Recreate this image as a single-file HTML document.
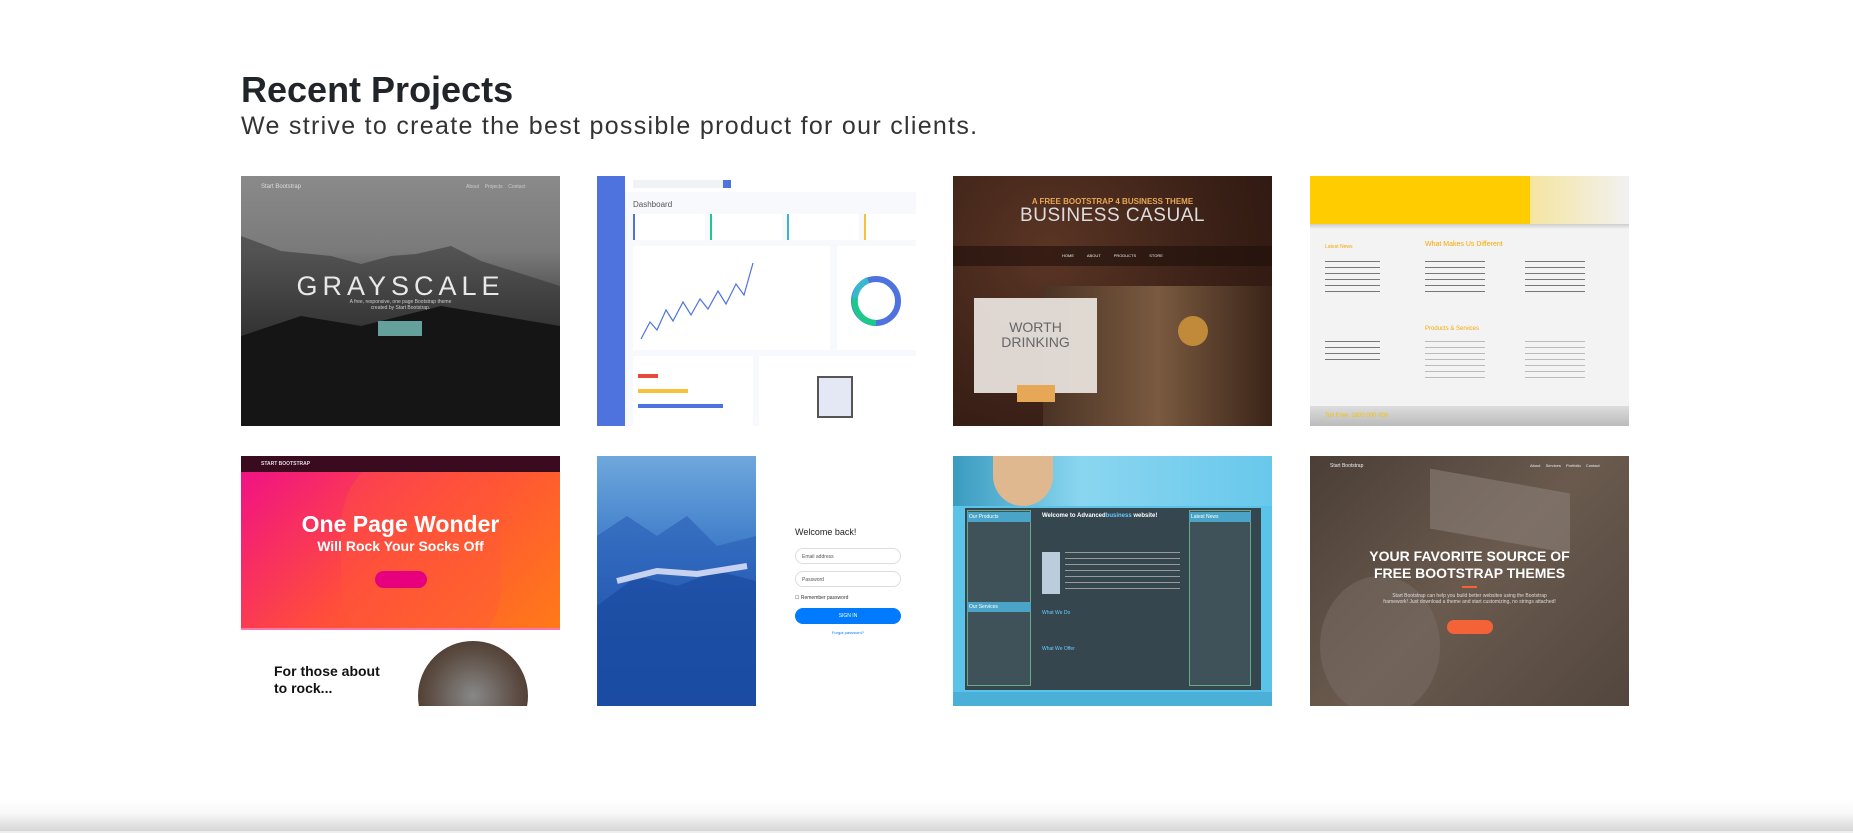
<!DOCTYPE html>
<html><head><meta charset="utf-8"><style>
*{margin:0;padding:0;box-sizing:border-box}
body{width:1853px;height:833px;background:#fff;position:relative;overflow:hidden;font-family:"Liberation Sans",sans-serif}
h1{position:absolute;left:241px;top:69px;font-size:36px;font-weight:bold;color:#212529;letter-spacing:0px}
.sub{position:absolute;left:241px;top:112px;font-size:25px;color:#333;font-weight:300;letter-spacing:1.3px}
.t{position:absolute;width:319px;height:250px;overflow:hidden}
.abs{position:absolute}
.foot{position:absolute;left:0;top:800px;width:1853px;height:31px;background:linear-gradient(#fff,#f7f7f7 45%,#d6d6d6)}
.foot2{position:absolute;left:0;top:831px;width:1853px;height:2px;background:#eee}
</style></head><body>
<h1>Recent Projects</h1>
<div class="sub">We strive to create the best possible product for our clients.</div>

<!-- grayscale -->
<div class="t" style="left:241px;top:176px;background:linear-gradient(#8a8a8a,#7a7a7a 30%,#3a3a3a 60%,#111)">
 <svg class="abs" width="319" height="250" style="left:0;top:0"><path d="M0 60 L40 75 L90 80 L120 88 L150 80 L175 78 L210 70 L240 85 L319 110 L319 250 L0 250Z" fill="#333" opacity=".55"/><path d="M0 160 L60 140 L120 150 L200 130 L319 150 L319 250 L0 250Z" fill="#151515"/></svg>
 <div class="abs" style="left:20px;top:8px;font-size:6px;color:#ddd">Start Bootstrap</div>
 <div class="abs" style="left:225px;top:8px;font-size:5px;color:#ccc">About &nbsp;&nbsp; Projects &nbsp;&nbsp; Contact</div>
 <div class="abs" style="left:0;width:319px;top:95px;text-align:center;font-size:27px;letter-spacing:5px;color:#e8e8e8">GRAYSCALE</div>
 <div class="abs" style="left:0;width:319px;top:123px;text-align:center;font-size:5px;color:#ccc">A free, responsive, one page Bootstrap theme<br>created by Start Bootstrap.</div>
 <div class="abs" style="left:137px;top:145px;width:44px;height:15px;background:#64a19d"></div>
</div>

<!-- dashboard -->
<div class="t" style="left:597px;top:176px;background:#f8f9fc">
 <div class="abs" style="left:0;top:0;width:28px;height:250px;background:#4e73df"></div>
 <div class="abs" style="left:28px;top:0;width:291px;height:16px;background:#fff"></div>
 <div class="abs" style="left:36px;top:4px;width:90px;height:8px;background:#f1f2f6"></div>
 <div class="abs" style="left:126px;top:4px;width:8px;height:8px;background:#4e73df"></div>
 <div class="abs" style="left:36px;top:24px;font-size:8px;color:#555">Dashboard</div>
 <div class="abs" style="left:36px;top:38px;width:72px;height:26px;background:#fff;border-left:2px solid #4e73df"></div>
 <div class="abs" style="left:113px;top:38px;width:72px;height:26px;background:#fff;border-left:2px solid #1cc88a"></div>
 <div class="abs" style="left:190px;top:38px;width:72px;height:26px;background:#fff;border-left:2px solid #36b9cc"></div>
 <div class="abs" style="left:267px;top:38px;width:52px;height:26px;background:#fff;border-left:2px solid #f6c23e"></div>
 <div class="abs" style="left:36px;top:70px;width:197px;height:104px;background:#fff"></div>
 <div class="abs" style="left:240px;top:70px;width:79px;height:104px;background:#fff"></div>
 <svg class="abs" style="left:36px;top:70px" width="283" height="104"><polyline points="8,93 17,76 24,84 33,64 40,75 50,56 58,69 67,53 75,63 85,45 93,58 103,38 111,49 120,17" fill="none" stroke="#4e73df" stroke-width="1.2"/><circle cx="243" cy="55" r="22" fill="none" stroke="#4e73df" stroke-width="6"/><path d="M243 77 A22 22 0 0 1 222 52" fill="none" stroke="#1cc88a" stroke-width="6"/><path d="M222 52 A22 22 0 0 1 235 34" fill="none" stroke="#36b9cc" stroke-width="6"/></svg>
 <div class="abs" style="left:36px;top:180px;width:120px;height:70px;background:#fff"></div>
 <div class="abs" style="left:41px;top:198px;width:20px;height:4px;background:#e74a3b"></div>
 <div class="abs" style="left:41px;top:213px;width:50px;height:4px;background:#f6c23e"></div>
 <div class="abs" style="left:41px;top:228px;width:85px;height:4px;background:#4e73df"></div>
 <div class="abs" style="left:162px;top:180px;width:157px;height:70px;background:#fff"></div>
 <div class="abs" style="left:220px;top:200px;width:36px;height:42px;background:#e4e8f5;border:2px solid #555"></div>
</div>

<!-- business casual -->
<div class="t" style="left:953px;top:176px;background:radial-gradient(circle at 30% 30%,#5a3524,#3a2017 60%,#2a160e)">
 <div class="abs" style="left:0;width:319px;top:21px;text-align:center;font-size:8px;font-weight:bold;color:#e6a756">A FREE BOOTSTRAP 4 BUSINESS THEME</div>
 <div class="abs" style="left:0;width:319px;top:29px;text-align:center;font-size:19px;color:#ddd;letter-spacing:0.5px">BUSINESS CASUAL</div>
 <div class="abs" style="left:0;top:70px;width:319px;height:20px;background:rgba(30,15,10,.6)"></div>
 <div class="abs" style="left:0;width:319px;top:77px;text-align:center;font-size:4px;color:#eee;word-spacing:12px">HOME ABOUT PRODUCTS STORE</div>
 <div class="abs" style="left:90px;top:110px;width:229px;height:140px;background:linear-gradient(90deg,#4a3325,#7a5a40 50%,#3a2418)"></div>
 <div class="abs" style="left:225px;top:140px;width:30px;height:30px;border-radius:50%;background:#c08a3a"></div>
 <div class="abs" style="left:21px;top:122px;width:123px;height:95px;background:rgba(235,230,225,.92)"></div>
 <div class="abs" style="left:21px;top:144px;width:123px;text-align:center;font-size:14px;color:#666;line-height:15px">WORTH<br>DRINKING</div>
 <div class="abs" style="left:64px;top:209px;width:38px;height:17px;background:#e6a756"></div>
</div>

<!-- yellow -->
<div class="t" style="left:1310px;top:176px;background:#f3f3f3">
 <div class="abs" style="left:0;top:0;width:319px;height:48px;background:#ffcc00"></div>
 <div class="abs" style="left:220px;top:0;width:99px;height:48px;background:linear-gradient(90deg,#f5e5a0,#f1f1f1)"></div>
 <div class="abs" style="left:0;top:48px;width:319px;height:5px;background:linear-gradient(#ccc,#f3f3f3)"></div>
 <div class="abs" style="left:115px;top:65px;font-size:7px;color:#f6a800">What Makes Us Different</div>
 <div class="abs" style="left:15px;top:68px;font-size:5px;color:#f6a800">Latest News</div>
 <div class="abs" style="left:15px;top:85px;width:55px;height:35px;background:repeating-linear-gradient(#777 0 1px,transparent 1px 6px)"></div>
 <div class="abs" style="left:115px;top:85px;width:60px;height:35px;background:repeating-linear-gradient(#777 0 1px,transparent 1px 6px)"></div>
 <div class="abs" style="left:215px;top:85px;width:60px;height:35px;background:repeating-linear-gradient(#777 0 1px,transparent 1px 6px)"></div>
 <div class="abs" style="left:115px;top:150px;font-size:6px;color:#f6a800">Products &amp; Services</div>
 <div class="abs" style="left:15px;top:165px;width:55px;height:20px;background:repeating-linear-gradient(#777 0 1px,transparent 1px 6px)"></div>
 <div class="abs" style="left:115px;top:165px;width:60px;height:40px;background:repeating-linear-gradient(#bbb 0 1px,transparent 1px 6px)"></div>
 <div class="abs" style="left:215px;top:165px;width:60px;height:40px;background:repeating-linear-gradient(#bbb 0 1px,transparent 1px 6px)"></div>
 <div class="abs" style="left:0;top:230px;width:319px;height:20px;background:linear-gradient(#ddd,#bbb)"></div>
 <div class="abs" style="left:15px;top:237px;font-size:6px;color:#f6c200">Toll Free: 1800 000 000</div>
</div>

<!-- one page wonder -->
<div class="t" style="left:241px;top:456px;background:#fff">
 <div class="abs" style="left:0;top:0;width:319px;height:172px;background:linear-gradient(135deg,#f00e8a,#ff4e3a 50%,#ff7a18);overflow:hidden">
  <div class="abs" style="left:100px;top:-10px;width:160px;height:220px;border-radius:80px;background:rgba(255,90,60,.35)"></div>
 </div>
 <div class="abs" style="left:0;top:0;width:319px;height:16px;background:#3a0a1e"></div>
 <div class="abs" style="left:20px;top:5px;font-size:5px;color:#ddd;font-weight:bold">START BOOTSTRAP</div>
 <div class="abs" style="left:0;width:319px;top:55px;text-align:center;font-size:23px;font-weight:bold;color:#fff">One Page Wonder</div>
 <div class="abs" style="left:0;width:319px;top:82px;text-align:center;font-size:14px;font-weight:bold;color:#fff">Will Rock Your Socks Off</div>
 <div class="abs" style="left:134px;top:115px;width:52px;height:17px;border-radius:9px;background:#e6007e"></div>
 <div class="abs" style="left:0;top:172px;width:319px;height:2px;background:#f7a"></div>
 <div class="abs" style="left:33px;top:207px;font-size:14px;font-weight:bold;color:#111;line-height:17px">For those about<br>to rock...</div>
 <div class="abs" style="left:177px;top:185px;width:110px;height:110px;border-radius:50%;background:radial-gradient(#888,#5a4a40 60%,#3a2a20)"></div>
</div>

<!-- login -->
<div class="t" style="left:597px;top:456px;background:#fff">
 <div class="abs" style="left:0;top:0;width:159px;height:250px;background:linear-gradient(#6fa8dc,#3a78c8 40%,#1d4fa8 70%,#0f3a96)"></div>
 <svg class="abs" width="159" height="250"><path d="M0 80 L30 60 L60 80 L90 60 L120 90 L159 80 L159 250 L0 250Z" fill="#2a5eb5" opacity=".6"/><path d="M0 150 L40 120 L80 130 L120 115 L159 125 L159 250 L0 250Z" fill="#1a4aa0" opacity=".7"/><path d="M20 125 L60 115 L100 118 L150 110" stroke="#eef" stroke-width="6" fill="none" opacity=".8"/></svg>
 <div class="abs" style="left:198px;top:71px;font-size:9px;color:#222">Welcome back!</div>
 <div class="abs" style="left:198px;top:92px;width:106px;height:16px;border:1px solid #ddd;border-radius:8px;font-size:5px;color:#555;padding:5px 6px">Email address</div>
 <div class="abs" style="left:198px;top:115px;width:106px;height:16px;border:1px solid #ddd;border-radius:8px;font-size:5px;color:#555;padding:5px 6px">Password</div>
 <div class="abs" style="left:198px;top:139px;font-size:5px;color:#333">☐ Remember password</div>
 <div class="abs" style="left:198px;top:152px;width:106px;height:16px;border-radius:8px;background:#007bff;color:#fff;font-size:5px;text-align:center;line-height:16px">SIGN IN</div>
 <div class="abs" style="left:198px;top:174px;width:106px;text-align:center;font-size:4px;color:#007bff">Forgot password?</div>
</div>

<!-- advanced business -->
<div class="t" style="left:953px;top:456px;background:#5bc3e8">
 <div class="abs" style="left:0;top:0;width:319px;height:50px;background:linear-gradient(90deg,#3a9bc0,#8ad6f0 40%,#68c8ec)"></div>
 <div class="abs" style="left:40px;top:0;width:60px;height:50px;background:#e0b890;border-radius:0 0 30px 30px"></div>
 <div class="abs" style="left:12px;top:52px;width:296px;height:182px;background:#36464e"></div>
 <div class="abs" style="left:14px;top:54px;width:64px;height:176px;background:#3f5159;border:1px solid #6a8"></div>
 <div class="abs" style="left:236px;top:54px;width:62px;height:176px;background:#3f5159;border:1px solid #6a8"></div>
 <div class="abs" style="left:14px;top:56px;width:64px;height:10px;background:#4aa4c8;font-size:5px;color:#fff;padding:2px">Our Products</div>
 <div class="abs" style="left:236px;top:56px;width:62px;height:10px;background:#4aa4c8;font-size:5px;color:#fff;padding:2px">Latest News</div>
 <div class="abs" style="left:14px;top:146px;width:64px;height:10px;background:#4aa4c8;font-size:5px;color:#fff;padding:2px">Our Services</div>
 <div class="abs" style="left:89px;top:57px;font-size:6px;font-weight:bold;color:#fff">Welcome to Advanced<span style="color:#6cf">business</span> website!</div>
 <div class="abs" style="left:89px;top:96px;width:18px;height:42px;background:#bcd"></div>
 <div class="abs" style="left:112px;top:96px;width:115px;height:42px;background:repeating-linear-gradient(#999 0 1px,transparent 1px 6px)"></div>
 <div class="abs" style="left:89px;top:154px;font-size:5px;color:#6cf">What We Do</div>
 <div class="abs" style="left:89px;top:190px;font-size:5px;color:#6cf">What We Offer</div>
 <div class="abs" style="left:0;top:236px;width:319px;height:14px;background:#4ab0d8"></div>
</div>

<!-- favorite source -->
<div class="t" style="left:1310px;top:456px;background:linear-gradient(135deg,#4a3e36,#6a5a4e 50%,#52463e)">
 <div class="abs" style="left:120px;top:25px;width:140px;height:60px;background:#8a7e76;transform:skewY(10deg);opacity:.6"></div>
 <div class="abs" style="left:10px;top:120px;width:120px;height:140px;border-radius:50%;background:#7a6e66;opacity:.5"></div>
 <div class="abs" style="left:20px;top:7px;font-size:5px;color:#eee">Start Bootstrap</div>
 <div class="abs" style="left:220px;top:7px;font-size:4px;color:#eee;word-spacing:4px">About Services Portfolio Contact</div>
 <div class="abs" style="left:0;width:319px;top:92px;text-align:center;font-size:14px;font-weight:bold;color:#fff;line-height:17px">YOUR FAVORITE SOURCE OF<br>FREE BOOTSTRAP THEMES</div>
 <div class="abs" style="left:152px;top:130px;width:15px;height:2px;background:#f4623a"></div>
 <div class="abs" style="left:0;width:319px;top:137px;text-align:center;font-size:5px;color:#ddd">Start Bootstrap can help you build better websites using the Bootstrap<br>framework! Just download a theme and start customizing, no strings attached!</div>
 <div class="abs" style="left:137px;top:164px;width:46px;height:14px;border-radius:7px;background:#f4623a"></div>
</div>

<div class="foot"></div><div class="foot2"></div>
</body></html>
